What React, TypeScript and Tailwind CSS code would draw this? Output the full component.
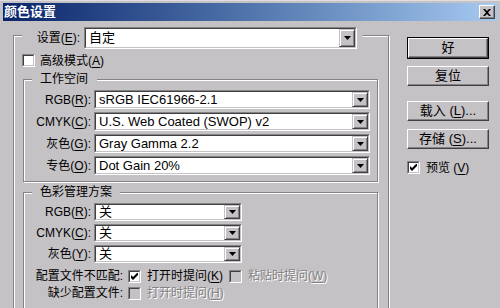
import type { ReactNode } from "react"

const ui = "font-['Liberation_Sans','Noto_Sans_CJK_SC',sans-serif]"

function U({ children }: { children: ReactNode }) {
  return <span className="underline underline-offset-[2px]">{children}</span>
}

function Arrow() {
  return (
    <svg width="7" height="4" viewBox="0 0 7 4">
      <polygon points="0,0 7,0 3.5,4" fill="#000" />
    </svg>
  )
}

function Combo({ value, className }: { value: string; className: string }) {
  return (
    <div className={`flex border border-t-[#848284] border-l-[#848284] border-b-white border-r-white ${className}`}>
      <div className="flex min-w-0 flex-1 border border-t-[#424142] border-l-[#424142] border-b-[#c5c2c5] border-r-[#c5c2c5] bg-white">
        <div className="flex min-w-0 flex-1 items-center overflow-hidden whitespace-nowrap pl-[3px] text-[13px] text-black">
          {value}
        </div>
        <div className="flex w-[16px] items-center justify-center border border-t-[#c5c2c5] border-l-[#c5c2c5] border-b-[#424142] border-r-[#424142] bg-[#c5c2c5] shadow-[inset_1px_1px_0_#fff,inset_-1px_-1px_0_#848284]">
          <Arrow />
        </div>
      </div>
    </div>
  )
}

function Check({ checked = false, disabled = false }: { checked?: boolean; disabled?: boolean }) {
  return (
    <div className="h-[13px] w-[13px] shrink-0 border border-t-[#848284] border-l-[#848284] border-b-white border-r-white">
      <div
        className={`flex h-full w-full items-center justify-center border border-t-[#424142] border-l-[#424142] border-b-[#c5c2c5] border-r-[#c5c2c5] ${disabled ? "bg-[#c5c2c5]" : "bg-white"}`}
      >
        {checked && (
          <svg width="7" height="7" viewBox="0 0 7 7">
            <path d="M0 2v3l2 2 5-5V-1L2 4z" fill="#000" />
          </svg>
        )}
      </div>
    </div>
  )
}

function Btn({ children, def = false }: { children: ReactNode; def?: boolean }) {
  const face = (
    <div className="flex h-[20px] w-full items-center justify-center border border-t-white border-l-white border-b-[#424142] border-r-[#424142] bg-[#c5c2c5] text-[13px] text-black shadow-[inset_-1px_-1px_0_#848284]">
      {children}
    </div>
  )
  if (def) return <div className="border border-black">{face}</div>
  return face
}

function Group({ title, titleClass, className, children }: { title: string; titleClass: string; className: string; children: ReactNode }) {
  return (
    <div className={`border border-[#848284] shadow-[inset_1px_1px_0_#fff,1px_1px_0_#fff] ${className}`}>
      <div className={`-mt-[8px] ml-[8px] h-[14px] w-fit bg-[#c5c2c5] pl-[8px] text-[12px] leading-[14px] text-black ${titleClass}`}>
        {title}
      </div>
      {children}
    </div>
  )
}

function Row({ label, value, combo }: { label: ReactNode; value: string; combo: string }) {
  return (
    <div className="flex items-center">
      <div className="w-[70px] pr-[3px] text-right text-[12px] text-black">{label}</div>
      <Combo value={value} className={combo} />
    </div>
  )
}

export default function App() {
  return (
    <div className={`h-[308px] w-[500px] overflow-hidden bg-[#c5c2c5] ${ui}`}>
      <div className="border-t border-t-[#e0dee0] px-[3px] pt-[2px]">
        <div className="flex h-[18px] items-center justify-between bg-gradient-to-r from-[#0a246a] to-[#a6caf0] pl-[1px] pr-[2px]">
          <span className="text-[13px] font-bold leading-[18px] text-white">颜色设置</span>
          <div className="flex h-[14px] w-[16px] items-center justify-center border border-t-white border-l-white border-b-[#424142] border-r-[#424142] bg-[#c5c2c5] shadow-[inset_-1px_-1px_0_#848284]">
            <svg width="8" height="7" viewBox="0 0 8 7">
              <path d="M0 0h2l2 2 2-2h2L5 3.5 8 7H6L4 5 2 7H0l3-3.5z" fill="#000" />
            </svg>
          </div>
        </div>
      </div>

      <div className="flex items-start">
        <div className="ml-[13px] mt-[14px] h-[300px] w-[376px] border border-[#848284] shadow-[inset_1px_1px_0_#fff,1px_1px_0_#fff]">
          <div className="-mt-[9px] ml-[8px] flex h-[22px] w-[341px] items-center bg-[#c5c2c5]">
            <div className="w-[62px] pr-[4px] text-right text-[12px] text-black">
              设置(<U>E</U>):
            </div>
            <Combo value="自定" className="h-[22px] w-[273px]" />
          </div>

          <div className="ml-[8px] mt-[5px] flex h-[13px] items-center gap-[5px] text-[12px] text-black">
            <Check />
            <span>
              高级模式(<U>A</U>)
            </span>
          </div>

          <Group title="工作空间" titleClass="pr-[9px]" className="ml-[9px] mt-[12px] w-[355px] pb-[6px]">
            <div className="mt-[4px] flex flex-col gap-[3px]">
              <Row label={<>RGB(<U>R</U>):</>} value="sRGB IEC61966-2.1" combo="h-[19px] w-[276px]" />
              <Row label={<>CMYK(<U>C</U>):</>} value="U.S. Web Coated (SWOP) v2" combo="h-[19px] w-[276px]" />
              <Row label={<>灰色(<U>G</U>):</>} value="Gray Gamma 2.2" combo="h-[19px] w-[276px]" />
              <Row label={<>专色(<U>O</U>):</>} value="Dot Gain 20%" combo="h-[19px] w-[276px]" />
            </div>
          </Group>

          <Group title="色彩管理方案" titleClass="pr-[8px]" className="ml-[9px] mt-[10px] h-[200px] w-[355px]">
            <div className="mt-[4px] flex flex-col gap-[3px]">
              <Row label={<>RGB(<U>R</U>):</>} value="关" combo="h-[18px] w-[148px]" />
              <Row label={<>CMYK(<U>C</U>):</>} value="关" combo="h-[18px] w-[148px]" />
              <Row label={<>灰色(<U>Y</U>):</>} value="关" combo="h-[18px] w-[148px]" />
            </div>
            <div className="mt-[6px] flex h-[14px] items-center text-[12px]">
              <div className="w-[104px] pr-[5px] text-right text-black">配置文件不匹配:</div>
              <Check checked />
              <span className="ml-[6px] text-black">
                打开时提问(<U>K</U>)
              </span>
              <div className="ml-[6px]">
                <Check disabled />
              </div>
              <span className="ml-[6px] text-[#848284] [text-shadow:1px_1px_0_#fff]">
                粘贴时提问(<U>W</U>)
              </span>
            </div>
            <div className="mt-[3px] flex h-[14px] items-center text-[12px]">
              <div className="w-[104px] pr-[5px] text-right text-black">缺少配置文件:</div>
              <Check disabled />
              <span className="ml-[6px] text-[#848284] [text-shadow:1px_1px_0_#fff]">
                打开时提问(<U>H</U>)
              </span>
            </div>
          </Group>
        </div>

        <div className="ml-[18px] mt-[16px] flex w-[82px] flex-col">
          <Btn def>好</Btn>
          <div className="mt-[7px]">
            <Btn>复位</Btn>
          </div>
          <div className="mt-[15px]">
            <Btn>
              载入 (<U>L</U>)...
            </Btn>
          </div>
          <div className="mt-[8px]">
            <Btn>
              存储 (<U>S</U>)...
            </Btn>
          </div>
          <div className="mt-[12px] flex h-[13px] items-center gap-[6px] text-[12px] text-black">
            <Check checked />
            <span>
              预览 (<U>V</U>)
            </span>
          </div>
        </div>
      </div>
    </div>
  )
}
